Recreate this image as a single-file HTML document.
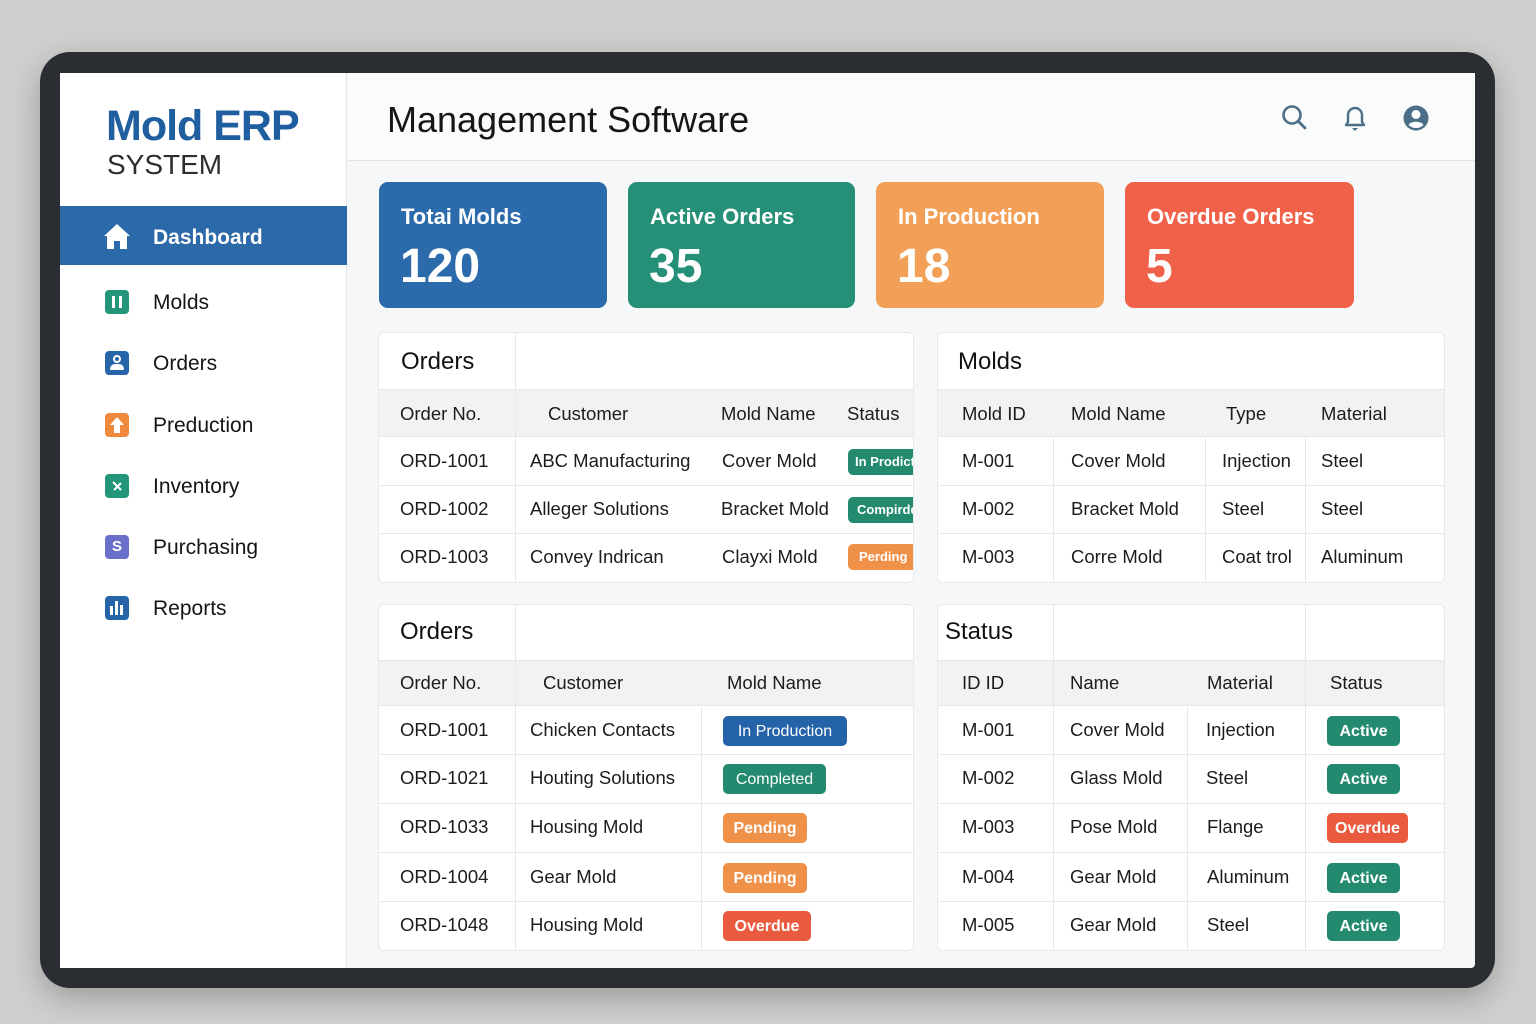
<!DOCTYPE html>
<html><head><meta charset="utf-8"><style>
*{margin:0;padding:0;box-sizing:border-box}
body{width:1536px;height:1024px;overflow:hidden;background:#cfcfcd;font-family:"Liberation Sans",sans-serif;position:relative}
.a{position:absolute}
.frame{left:40px;top:52px;width:1455px;height:936px;background:#2a2d32;border-radius:30px;box-shadow:0 10px 30px rgba(0,0,0,.25)}
.screen{left:60px;top:73px;width:1415px;height:895px;background:#f6f7f8;border-radius:4px;overflow:hidden}
.side{left:60px;top:73px;width:287px;height:895px;background:#fff;border-right:1px solid #e4e6e8}
.t{position:absolute;font-size:18.5px;color:#1c1c1c;line-height:20px;margin-top:-10px;white-space:nowrap}
.h{position:absolute;font-size:24px;color:#111;line-height:28px;margin-top:-14px;font-weight:500}
.nav{position:absolute;left:153px;font-size:21px;color:#151515;line-height:26px;margin-top:-12px}
.ic{position:absolute;left:105px;width:24px;height:24px;border-radius:4px;margin-top:-12px}
.card{position:absolute;top:182px;height:126px;border-radius:9px;color:#fff}
.card .l{position:absolute;left:22px;top:22px;font-size:22px;font-weight:bold}
.card .n{position:absolute;left:21px;top:57px;font-size:48px;font-weight:bold}
.panel{position:absolute;background:#fff;border:1px solid #e8e9eb;border-radius:6px;overflow:hidden}
.hd{position:absolute;left:0;right:0;background:#f1f2f3;border-top:1px solid #e6e7e9;border-bottom:1px solid #e6e7e9}
.hl{position:absolute;height:1px;background:#e8e9eb}
.vl{position:absolute;width:1px;background:#e6e7e9}
.b{position:absolute;height:30px;margin-top:-14px;border-radius:5px;color:#fff;font-size:16px;font-weight:bold;line-height:31px;text-align:center;white-space:nowrap;overflow:hidden}
.g{background:#238a6f}.o{background:#f0914a}.r{background:#e95a3e}.bl{background:#2563a8}
</style></head><body>
<div class="a frame"></div>
<div class="a screen"></div>
<div class="a" style="left:348px;top:73px;width:1127px;height:88px;background:#fafbfb;border-bottom:1px solid #e2e4e6"></div>
<div class="a" style="left:387px;top:99px;font-size:36px;color:#161616;line-height:42px">Management Software</div>
<svg class="a" style="left:1280px;top:103px" width="30" height="30" viewBox="0 0 30 30"><circle cx="12" cy="12" r="8.5" fill="none" stroke="#4a6f86" stroke-width="2.6"/><line x1="18" y1="18" x2="25" y2="25" stroke="#4a6f86" stroke-width="2.8" stroke-linecap="round"/></svg>
<svg class="a" style="left:1340px;top:103px" width="30" height="30" viewBox="0 0 30 30"><path d="M6 22 L8 19 L8 12 A7 7 0 0 1 22 12 L22 19 L24 22 Z" fill="none" stroke="#4a6f86" stroke-width="2.4" stroke-linejoin="round"/><path d="M12 25 L18 25 L15 28 Z" fill="#4a6f86"/></svg>
<svg class="a" style="left:1401px;top:103px" width="30" height="30" viewBox="0 0 30 30"><circle cx="15" cy="15" r="12.5" fill="#4a6f86"/><circle cx="15" cy="11.5" r="4.5" fill="#fff"/><path d="M7.5 22 A8 5 0 0 1 22.5 22 A11 11 0 0 1 7.5 22 Z" fill="#fff"/></svg>
<div class="a side"></div>
<div class="a" style="left:106px;top:101px;font-size:43px;font-weight:bold;color:#1f5f9f;line-height:50px;letter-spacing:-1px">Mold ERP</div>
<div class="a" style="left:107px;top:148px;font-size:28px;color:#2e2e2e;line-height:34px">SYSTEM</div>
<div class="a" style="left:60px;top:206px;width:287px;height:59px;background:#2c69a9"></div>
<svg class="a" style="left:102px;top:222px" width="30" height="28" viewBox="0 0 30 28"><path d="M15 2 L28 14 L25 14 L25 27 L18 27 L18 19 L12 19 L12 27 L5 27 L5 14 L2 14 Z" fill="#fff"/></svg>
<div class="nav" style="top:237px;color:#fff;font-weight:bold">Dashboard</div>
<div class="ic" style="top:302px;background:#23967a"><div class="a" style="left:7px;top:6px;width:3px;height:12px;background:#fff"></div><div class="a" style="left:14px;top:6px;width:3px;height:12px;background:#fff"></div></div>
<div class="nav" style="top:302px">Molds</div>
<div class="ic" style="top:363px;background:#2565a8"><div class="a" style="left:8px;top:4px;width:8px;height:8px;border-radius:50%;border:2px solid #fff"></div><div class="a" style="left:5px;top:13px;width:14px;height:6px;border-radius:5px 5px 1px 1px;background:#fff"></div></div>
<div class="nav" style="top:363px">Orders</div>
<div class="ic" style="top:425px;background:#ef8a3c"><svg class="a" style="left:4px;top:3px" width="16" height="18" viewBox="0 0 16 18"><path d="M8 1 L15 9 L11 9 L11 17 L5 17 L5 9 L1 9 Z" fill="#fff"/></svg></div>
<div class="nav" style="top:425px">Preduction</div>
<div class="ic" style="top:486px;background:#23967a"><svg class="a" style="left:5px;top:5px" width="14" height="14" viewBox="0 0 14 14"><path d="M3 3 L11 11 M11 4 L4 11" stroke="#fff" stroke-width="2"/></svg></div>
<div class="nav" style="top:486px">Inventory</div>
<div class="ic" style="top:547px;background:#6a6fc9"><div class="a" style="left:0;top:3px;width:24px;text-align:center;color:#fff;font-weight:bold;font-size:15px;line-height:18px">S</div></div>
<div class="nav" style="top:547px">Purchasing</div>
<div class="ic" style="top:608px;background:#2565a8"><div class="a" style="left:5px;top:10px;width:3px;height:9px;background:#fff"></div><div class="a" style="left:10px;top:5px;width:3px;height:14px;background:#fff"></div><div class="a" style="left:15px;top:9px;width:3px;height:10px;background:#fff"></div></div>
<div class="nav" style="top:608px">Reports</div>
<div class="card" style="left:379px;width:228px;background:#2c6bab"><div class="l">Totai Molds</div><div class="n">120</div></div>
<div class="card" style="left:628px;width:227px;background:#268f77"><div class="l">Active Orders</div><div class="n">35</div></div>
<div class="card" style="left:876px;width:228px;background:#f2a057"><div class="l">In Production</div><div class="n">18</div></div>
<div class="card" style="left:1125px;width:229px;background:#ef6148"><div class="l">Overdue Orders</div><div class="n">5</div></div>

<div class="panel" style="left:378px;top:332px;width:536px;height:251px"></div>
<div class="hd" style="left:379px;right:623px;top:389px;height:48px"></div>
<div class="vl" style="left:515px;top:333px;height:249px"></div>
<div class="hl" style="left:379px;width:534px;top:485px"></div>
<div class="hl" style="left:379px;width:534px;top:533px"></div>
<div class="h" style="left:401px;top:362px">Orders</div>
<div class="t" style="left:400px;top:414px">Order No.</div><div class="t" style="left:548px;top:414px">Customer</div><div class="t" style="left:721px;top:414px">Mold Name</div><div class="t" style="left:847px;top:414px">Status</div>
<div class="t" style="left:400px;top:461px">ORD-1001</div><div class="t" style="left:530px;top:461px">ABC Manufacturing</div><div class="t" style="left:722px;top:461px">Cover Mold</div>
<div class="t" style="left:400px;top:509px">ORD-1002</div><div class="t" style="left:530px;top:509px">Alleger Solutions</div><div class="t" style="left:721px;top:509px">Bracket Mold</div>
<div class="t" style="left:400px;top:557px">ORD-1003</div><div class="t" style="left:530px;top:557px">Convey Indrican</div><div class="t" style="left:722px;top:557px">Clayxi Mold</div>
<div class="b g" style="left:848px;top:462px;width:65px;height:26px;margin-top:-13px;line-height:26px;font-size:13px;border-radius:5px 0 0 5px;text-align:left;padding-left:7px">In Prodiction</div>
<div class="b g" style="left:848px;top:510px;width:65px;height:26px;margin-top:-13px;line-height:26px;font-size:13px;border-radius:5px 0 0 5px;text-align:left;padding-left:9px">Compirdd</div>
<div class="b o" style="left:848px;top:557px;width:65px;height:26px;margin-top:-13px;line-height:26px;font-size:13px;border-radius:5px 0 0 5px;text-align:left;padding-left:11px">Perding</div>

<div class="panel" style="left:937px;top:332px;width:508px;height:251px"></div>
<div class="hd" style="left:938px;right:92px;top:389px;height:48px"></div>
<div class="vl" style="left:1053px;top:438px;height:144px"></div>
<div class="vl" style="left:1205px;top:438px;height:144px"></div>
<div class="vl" style="left:1305px;top:438px;height:144px"></div>
<div class="hl" style="left:938px;width:506px;top:485px"></div>
<div class="hl" style="left:938px;width:506px;top:533px"></div>
<div class="h" style="left:958px;top:362px">Molds</div>
<div class="t" style="left:962px;top:414px">Mold ID</div><div class="t" style="left:1071px;top:414px">Mold Name</div><div class="t" style="left:1226px;top:414px">Type</div><div class="t" style="left:1321px;top:414px">Material</div>
<div class="t" style="left:962px;top:461px">M-001</div><div class="t" style="left:1071px;top:461px">Cover Mold</div><div class="t" style="left:1222px;top:461px">Injection</div><div class="t" style="left:1321px;top:461px">Steel</div>
<div class="t" style="left:962px;top:509px">M-002</div><div class="t" style="left:1071px;top:509px">Bracket Mold</div><div class="t" style="left:1222px;top:509px">Steel</div><div class="t" style="left:1321px;top:509px">Steel</div>
<div class="t" style="left:962px;top:557px">M-003</div><div class="t" style="left:1071px;top:557px">Corre Mold</div><div class="t" style="left:1222px;top:557px">Coat trol</div><div class="t" style="left:1321px;top:557px">Aluminum</div>

<div class="panel" style="left:378px;top:604px;width:536px;height:347px"></div>
<div class="hd" style="left:379px;right:623px;top:660px;height:46px"></div>
<div class="vl" style="left:515px;top:605px;height:345px"></div>
<div class="vl" style="left:701px;top:707px;height:243px"></div>
<div class="hl" style="left:379px;width:534px;top:754px"></div>
<div class="hl" style="left:379px;width:534px;top:803px"></div>
<div class="hl" style="left:379px;width:534px;top:852px"></div>
<div class="hl" style="left:379px;width:534px;top:901px"></div>
<div class="h" style="left:400px;top:632px">Orders</div>
<div class="t" style="left:400px;top:683px">Order No.</div><div class="t" style="left:543px;top:683px">Customer</div><div class="t" style="left:727px;top:683px">Mold Name</div>
<div class="t" style="left:400px;top:730px">ORD-1001</div><div class="t" style="left:530px;top:730px">Chicken Contacts</div>
<div class="t" style="left:400px;top:778px">ORD-1021</div><div class="t" style="left:530px;top:778px">Houting Solutions</div>
<div class="t" style="left:400px;top:827px">ORD-1033</div><div class="t" style="left:530px;top:827px">Housing Mold</div>
<div class="t" style="left:400px;top:877px">ORD-1004</div><div class="t" style="left:530px;top:877px">Gear Mold</div>
<div class="t" style="left:400px;top:925px">ORD-1048</div><div class="t" style="left:530px;top:925px">Housing Mold</div>
<div class="b bl" style="left:723px;top:730px;width:124px;font-weight:normal">In Production</div>
<div class="b g" style="left:723px;top:778px;width:103px;font-weight:normal">Completed</div>
<div class="b o" style="left:723px;top:827px;width:84px">Pending</div>
<div class="b o" style="left:723px;top:877px;width:84px">Pending</div>
<div class="b r" style="left:723px;top:925px;width:88px">Overdue</div>

<div class="panel" style="left:937px;top:604px;width:508px;height:347px"></div>
<div class="hd" style="left:938px;right:92px;top:660px;height:46px"></div>
<div class="vl" style="left:1053px;top:605px;height:345px"></div>
<div class="vl" style="left:1187px;top:707px;height:243px"></div>
<div class="vl" style="left:1305px;top:605px;height:345px"></div>
<div class="hl" style="left:938px;width:506px;top:754px"></div>
<div class="hl" style="left:938px;width:506px;top:803px"></div>
<div class="hl" style="left:938px;width:506px;top:852px"></div>
<div class="hl" style="left:938px;width:506px;top:901px"></div>
<div class="h" style="left:945px;top:632px">Status</div>
<div class="t" style="left:962px;top:683px">ID ID</div><div class="t" style="left:1070px;top:683px">Name</div><div class="t" style="left:1207px;top:683px">Material</div><div class="t" style="left:1330px;top:683px">Status</div>
<div class="t" style="left:962px;top:730px">M-001</div><div class="t" style="left:1070px;top:730px">Cover Mold</div><div class="t" style="left:1206px;top:730px">Injection</div>
<div class="t" style="left:962px;top:778px">M-002</div><div class="t" style="left:1070px;top:778px">Glass Mold</div><div class="t" style="left:1206px;top:778px">Steel</div>
<div class="t" style="left:962px;top:827px">M-003</div><div class="t" style="left:1070px;top:827px">Pose Mold</div><div class="t" style="left:1207px;top:827px">Flange</div>
<div class="t" style="left:962px;top:877px">M-004</div><div class="t" style="left:1070px;top:877px">Gear Mold</div><div class="t" style="left:1207px;top:877px">Aluminum</div>
<div class="t" style="left:962px;top:925px">M-005</div><div class="t" style="left:1070px;top:925px">Gear Mold</div><div class="t" style="left:1207px;top:925px">Steel</div>
<div class="b g" style="left:1327px;top:730px;width:73px">Active</div>
<div class="b g" style="left:1327px;top:778px;width:73px">Active</div>
<div class="b r" style="left:1327px;top:827px;width:81px">Overdue</div>
<div class="b g" style="left:1327px;top:877px;width:73px">Active</div>
<div class="b g" style="left:1327px;top:925px;width:73px">Active</div>
</body></html>
